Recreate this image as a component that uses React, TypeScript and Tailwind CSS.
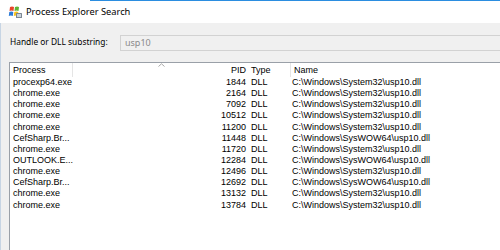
import React from "react";

const rows = [
  { proc: "procexp64.exe", pid: 1844, path: "C:\\Windows\\System32\\usp10.dll" },
  { proc: "chrome.exe", pid: 2164, path: "C:\\Windows\\System32\\usp10.dll" },
  { proc: "chrome.exe", pid: 7092, path: "C:\\Windows\\System32\\usp10.dll" },
  { proc: "chrome.exe", pid: 10512, path: "C:\\Windows\\System32\\usp10.dll" },
  { proc: "chrome.exe", pid: 11200, path: "C:\\Windows\\System32\\usp10.dll" },
  { proc: "CefSharp.Br...", pid: 11448, path: "C:\\Windows\\SysWOW64\\usp10.dll" },
  { proc: "chrome.exe", pid: 11720, path: "C:\\Windows\\System32\\usp10.dll" },
  { proc: "OUTLOOK.E...", pid: 12284, path: "C:\\Windows\\SysWOW64\\usp10.dll" },
  { proc: "chrome.exe", pid: 12496, path: "C:\\Windows\\System32\\usp10.dll" },
  { proc: "CefSharp.Br...", pid: 12692, path: "C:\\Windows\\SysWOW64\\usp10.dll" },
  { proc: "chrome.exe", pid: 13132, path: "C:\\Windows\\System32\\usp10.dll" },
  { proc: "chrome.exe", pid: 13784, path: "C:\\Windows\\System32\\usp10.dll" },
];

function AppIcon() {
  return (
    <svg width="16" height="14" viewBox="0 0 16 14">
      <path d="M3 2 Q5 1 7 2 L6.5 6 Q4.5 5 2.5 6 Z" fill="#e8452c" />
      <path d="M8 2 Q10 1 12 2 L11.5 6 Q9.5 5 7.5 6 Z" fill="#5fb336" />
      <path d="M2.3 7 Q4.3 6 6.3 7 L5.8 11 Q3.8 10 1.8 11 Z" fill="#2a7ad6" />
      <path d="M7.3 7 Q9.3 6 11.3 7 L10.8 11 Q8.8 10 6.8 11 Z" fill="#f7c21b" />
      <rect x="9" y="8" width="6" height="5" rx="0.5" fill="#7d8792" />
      <rect x="10" y="9" width="4" height="3" fill="#c9d3dd" />
    </svg>
  );
}

export default function App() {
  return (
    <div className="w-[500px] h-[250px] overflow-hidden bg-white flex flex-col font-['Liberation_Sans',Arial,sans-serif] text-black">
      {/* window frame top */}
      <div className="flex h-px shrink-0">
        <div className="w-[90px] bg-white" />
        <div className="flex-1 bg-[#2b8de0]" />
      </div>

      {/* title bar */}
      <div className="h-[22px] shrink-0 flex items-center pl-[7px] gap-[3px] bg-white">
        <AppIcon />
        <span className="font-['Noto_Sans',sans-serif] text-[9.3px] leading-none">Process Explorer Search</span>
      </div>

      <div className="flex-1 flex flex-col bg-[#f0f0f0] border-l border-[#c7d5e4] pl-[8px] min-h-0">
        {/* search row */}
        <div className="h-[39px] shrink-0 flex items-center">
          <span className="w-[111px] text-[8.4px] pl-px font-['Noto_Sans',sans-serif]">Handle or DLL substring:</span>
          <div className="flex-1 h-[16px] mt-[1px] border border-r-0 border-[#d2d2d2] bg-[#f0f0f0] flex items-center pl-[4px] text-[9px] text-[#8a8a8a] font-['Noto_Sans',sans-serif]">
            usp10
          </div>
        </div>

        {/* list view */}
        <div className="flex-1 bg-white border-l border-t border-[#9aa0a8] min-h-0 text-[9px]">
          <div className="relative flex h-[14px] items-center leading-none">
            <div className="w-[63px] pl-[3px] border-r border-[#e5e5e5] h-full flex items-center">Process</div>
            <div className="w-[175px] pr-[2px] text-right">PID</div>
            <div className="w-[43px] pl-[3px] border-r border-[#e5e5e5] h-full flex items-center">Type</div>
            <div className="pl-[3px]">Name</div>
            <svg className="absolute left-[148px] top-0" width="7" height="4" viewBox="0 0 7 4">
              <path d="M0.5 3.5 L3.5 0.8 L6.5 3.5" fill="none" stroke="#a8a8a8" strokeWidth="1" />
            </svg>
          </div>
          {rows.map((r, i) => (
            <div key={i} className="flex h-[11.15px] items-center leading-none whitespace-nowrap">
              <div className="w-[63px] pl-[3px]">{r.proc}</div>
              <div className="w-[175px] pr-[2px] text-right">{r.pid}</div>
              <div className="w-[43px] pl-[3px]">DLL</div>
              <div className="pl-[1px]">{r.path}</div>
            </div>
          ))}
        </div>
      </div>
    </div>
  );
}
